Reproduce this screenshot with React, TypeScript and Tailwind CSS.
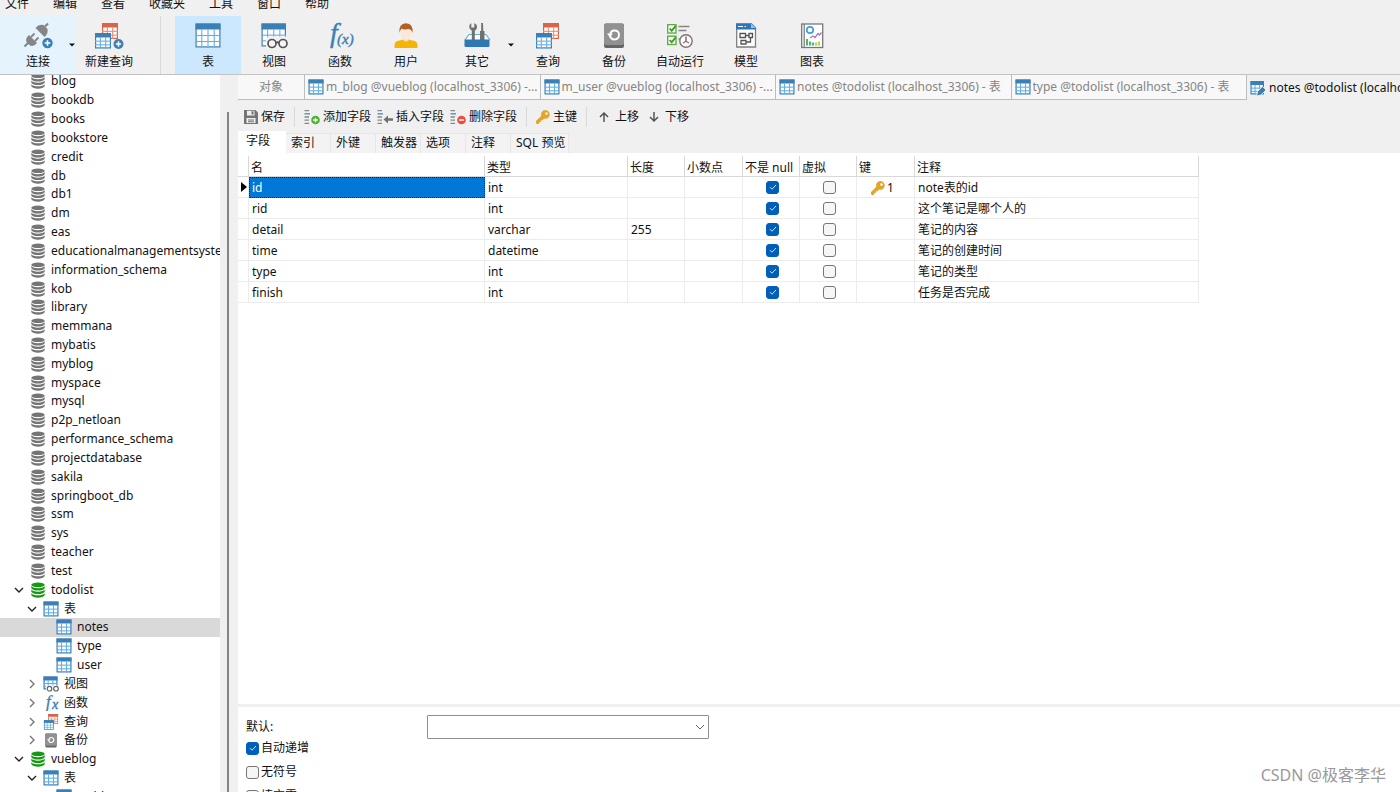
import { useState } from 'react'
import type { ReactNode } from 'react'
import clsx from 'clsx'

type TreeNode = {
  label: string
  icon: ReactNode
  depth: number
  open?: boolean
  selected?: boolean
}

type Field = {
  name: string
  type: string
  length?: string
  notNull: boolean
  virtual: boolean
  key?: number
  comment: string
}

function Sheet({ x, y, w, h, head, color, line, cols }: { x: number; y: number; w: number; h: number; head: number; color: string; line: string; cols: number }) {
  const body = h - head
  return (
    <g>
      <rect x={x + 0.6} y={y + 0.6} width={w - 1.2} height={h - 1.2} fill="#fff" stroke={color} strokeWidth="1.2" />
      <rect x={x} y={y} width={w} height={head} fill={color} />
      {Array.from({ length: cols - 1 }, (_, i) => (
        <path key={`c${i}`} d={`M${x + (w * (i + 1)) / cols} ${y + head}v${body}`} stroke={line} strokeWidth="1.1" />
      ))}
      {[1, 2].map(i => (
        <path key={`r${i}`} d={`M${x} ${y + head + (body * i) / 3}h${w}`} stroke={line} strokeWidth="1.1" />
      ))}
    </g>
  )
}

const BLUE = '#3a80b7'
const LINE = '#62b0e6'

function TableIcon({ className = 'size-4' }: { className?: string }) {
  return (
    <svg viewBox="0 0 16 16" className={clsx('shrink-0', className)}>
      <Sheet x={0.5} y={0.5} w={15} h={15} head={4} color={BLUE} line={LINE} cols={3} />
    </svg>
  )
}

function TableEditIcon() {
  return (
    <svg viewBox="0 0 16 16" className="size-4 shrink-0">
      <Sheet x={0.5} y={1} w={13.5} h={13.5} head={4} color={BLUE} line={LINE} cols={3} />
      <path d="M6.500 16l1-4.500 5-5L16 10l-5 5z" fill="#3a80b7" stroke="#f0f0f0" strokeWidth="0.900" />
    </svg>
  )
}

function BigTableIcon() {
  return (
    <svg viewBox="0 0 28 28" className="size-7">
      <Sheet x={1.5} y={2.5} w={25} h={24} head={6} color={BLUE} line={LINE} cols={4} />
    </svg>
  )
}

function ViewIcon({ className = 'size-7' }: { className?: string }) {
  return (
    <svg viewBox="0 0 28 28" className={clsx('shrink-0', className)}>
      <Sheet x={1.5} y={2.5} w={24.5} h={23} head={6} color={BLUE} line={LINE} cols={4} />
      <path d="M6 19l2-3.500h18.500L28 19v8.500H6z" fill="#f2f2f2" />
      <g fill="#f4f4f4" stroke="#555" strokeWidth="1.700">
        <circle cx="12" cy="22.500" r="4" />
        <circle cx="23" cy="22.500" r="4" />
        <path d="M16 22q1.500-1.500 3 0" fill="none" />
      </g>
    </svg>
  )
}

function SmallViewIcon() {
  return (
    <svg viewBox="0 0 16 16" className="size-4 shrink-0">
      <Sheet x={0.5} y={0.5} w={14} h={13} head={4} color={BLUE} line={LINE} cols={3} />
      <path d="M3 9.500h13V16H3z" fill="#fff" />
      <g fill="#fff" stroke="#666" strokeWidth="1.200">
        <circle cx="6.500" cy="12.700" r="2.300" />
        <circle cx="13" cy="12.700" r="2.300" />
      </g>
    </svg>
  )
}

function QueryIcon({ className = 'size-7', viewBox = '1 0 28 28', plus = false }: { className?: string; viewBox?: string; plus?: boolean }) {
  return (
    <svg viewBox={viewBox} className={clsx('shrink-0', className)}>
      <Sheet x={10} y={2} w={16} h={16} head={4.5} color="#d9644a" line="#ec8c74" cols={3} />
      <Sheet x={3} y={12} w={16} h={15.5} head={4.5} color={BLUE} line={LINE} cols={3} />
      {plus && (
        <g>
          <circle cx="26.500" cy="23" r="5" fill="#3a80b7" />
          <path d="M26.500 20.300v5.400M23.800 23h5.400" stroke="#fff" strokeWidth="1.500" />
        </g>
      )}
    </svg>
  )
}

function ConnectIcon() {
  return (
    <svg viewBox="0 0 32 28" className="h-7 w-8">
      <g fill="#858585" stroke="#858585">
        <path d="M2.500 25.500l4-4" strokeWidth="2.200" />
        <path d="M7 14l8 8q-3 4-7 2.500L4.500 21Q3 17.500 7 14z" stroke="none" />
        <path d="M9 16l3.500-3.500M13 20l3.500-3.500" strokeWidth="1.800" />
        <path d="M13.500 7l9 9q4-3.500 3-8L21.500 4q-4.500-1.500-8 3z" stroke="none" />
        <path d="M23 5.500L26 2.500" strokeWidth="2.200" />
      </g>
      <circle cx="25.500" cy="22" r="5.200" fill="#3a80b7" />
      <path d="M25.500 19.200v5.600M22.700 22h5.600" stroke="#fff" strokeWidth="1.600" />
    </svg>
  )
}

function FunctionIcon() {
  return (
    <svg viewBox="0 0 32 28" className="h-7 w-8" fill="#3a80b7" stroke="#3a80b7" fontFamily="Liberation Serif, serif" fontStyle="italic">
      <text x="6" y="21" fontSize="28" strokeWidth="0.400">f</text>
      <text x="13" y="23" fontSize="15" strokeWidth="0.400">(x)</text>
    </svg>
  )
}

function SmallFunctionIcon() {
  return (
    <svg viewBox="0 0 16 16" className="size-4 shrink-0" fill="#3a80b7" stroke="#3a80b7" fontFamily="Liberation Serif, serif" fontStyle="italic">
      <text x="3" y="12" fontSize="17" strokeWidth="0.300">f</text>
      <text x="9" y="14" fontSize="14" strokeWidth="0.400">x</text>
    </svg>
  )
}

function UserIcon() {
  return (
    <svg viewBox="0 0 28 28" className="size-7">
      <path d="M2.500 27v-3q0-4 5-4.500l4-1h5l4 1q5 .500 5 4.500v3z" fill="#f5b505" />
      <path d="M11 15h6v4q-3 3.500-6 0z" fill="#f3d9c4" />
      <ellipse cx="14" cy="11.500" rx="5.500" ry="7.500" fill="#fbe8da" />
      <path d="M7.500 12Q6.500 2.500 14 2.300 21.500 2.500 20.500 12 19.500 8.500 17 8 12 9 9.500 7.500 8 9 7.500 12z" fill="#b05f26" />
    </svg>
  )
}

function ToolsIcon() {
  return (
    <svg viewBox="0 0 28 28" className="size-7">
      <path d="M2 19l4-5.500h17l4 5.500" fill="#fff" stroke="#62b0e6" strokeWidth="1.200" />
      <path d="M8.800 19V9.500Q5.500 7.500 6.500 4l1.800-2v4.500h3V2q3 1.500 2.800 4 0 2.500-2.300 3.700V19z" fill="#707070" />
      <path d="M18.200 2h1.800l.300 8h1.200v9h-4.500v-9h1.200z" fill="#707070" />
      <path d="M1.500 18.500h25V25q0 1-1 1h-23q-1 0-1-1z" fill="#2f78b5" />
    </svg>
  )
}

function BackupIcon({ className = 'size-7' }: { className?: string }) {
  return (
    <svg viewBox="0 0 28 28" className={clsx('shrink-0', className)}>
      <rect x="4" y="2.500" width="20" height="24.500" rx="2" fill="#666" />
      <rect x="4" y="2.500" width="20" height="21.500" rx="2" fill="#919191" />
      <path d="M10 14.500q.800 4 4.500 4 4.500-.500 4.500-4.800-.300-4.200-4.500-4.200-3.500 0-4.300 3.500" fill="none" stroke="#fff" strokeWidth="1.900" />
      <path d="M7 12.500h6L9.800 16.300z" fill="#fff" />
    </svg>
  )
}

function AutomationIcon() {
  return (
    <svg viewBox="0 0 28 28" className="size-7" fill="none">
      <g stroke="#5fae45" strokeWidth="1.400">
        <rect x="1.700" y="3.700" width="8.300" height="8.300" fill="#fff" />
        <rect x="1.700" y="15.200" width="8.300" height="8.300" fill="#fff" />
        <path d="M3.700 7.500l2 2.300 4-5M3.700 19l2 2.300 4-5" strokeWidth="1.900" stroke="#43972c" />
      </g>
      <path d="M12.500 5.500h11M12.500 9.500h8M12.500 18h2" stroke="#858585" strokeWidth="1.300" />
      <circle cx="20" cy="20" r="6.200" fill="#fafafa" stroke="#777" strokeWidth="1.400" />
      <path d="M20 15.500v4.800" stroke="#555" strokeWidth="1.200" />
      <path d="M20 20.300l-3 1.700M20 20.300l3 1.700" stroke="#b65b68" strokeWidth="1.200" />
    </svg>
  )
}

function ModelIcon() {
  return (
    <svg viewBox="0 0 28 28" className="size-7" fill="none">
      <path d="M4.700 3h14.800l4 4v19H4.700z" fill="#fff" stroke="#7b8084" strokeWidth="1.300" />
      <path d="M4 2.500h15.500l4.500 4v2H4z" fill="#2f78b5" />
      <path d="M19 2.500l5 4.500h-5z" fill="#8cc7ed" />
      <path d="M6 5.500h5M12.500 5.500h1.500" stroke="#fff" />
      <g stroke="#555" strokeWidth="1.300">
        <path d="M8 12.500h5.500v4H8zM17 12.500h3.500v4H17zM9 19.500h5v3.500H9z" />
        <path d="M13.500 14.500H17M18.500 16.500v4.500H14" />
      </g>
    </svg>
  )
}

function ChartIcon() {
  return (
    <svg viewBox="0 0 28 28" className="size-7" fill="none">
      <rect x="3.700" y="3" width="21" height="23.500" fill="#fff" stroke="#777" strokeWidth="1.300" />
      <path d="M6.200 3v23.500" stroke="#777" strokeWidth="1.200" />
      <circle cx="12" cy="9" r="3.200" stroke="#3f9fe0" strokeWidth="1.700" />
      <path d="M12 17l3-2 2 1.500 3-4 1.500 1.500 2-2.500" stroke="#a978c8" strokeWidth="1.300" />
      <path d="M9 24.500V18M12 24.500v-4M15 24.500v-3" stroke="#2cae4c" strokeWidth="1.700" />
      <path d="M18 24.500v-3M21 24.500v-4" stroke="#9ccb3c" strokeWidth="1.700" />
    </svg>
  )
}

function DatabaseIcon({ active = false }: { active?: boolean }) {
  return (
    <svg viewBox="0 0 16 16" className="size-4 shrink-0" fill={active ? '#139a13' : '#757575'}>
      <ellipse cx="8" cy="2.800" rx="6.700" ry="2.300" />
      <path d="M1.300 4q2 2.200 6.700 2.200T14.700 4v2.200Q13 8.500 8 8.500T1.300 6.200z" />
      <path d="M1.300 7.600Q3 9.700 8 9.700t6.700-2.100v2.200Q13 12.100 8 12.100T1.300 9.800z" />
      <path d="M1.300 11.200q1.700 2.100 6.700 2.100t6.700-2.100v2.100Q13 15.700 8 15.700t-6.700-2.400z" />
    </svg>
  )
}

function SaveIcon() {
  return (
    <svg viewBox="0 0 14 14" className="size-[14px]">
      <path d="M0 0h11.500L14 2.500V14H0z" fill="#747474" />
      <path d="M3 0.800h7.500v4.700H3zM2.500 8h9v5h-9z" fill="#efefef" />
      <path d="M7.500 1.300h2v3.200h-2zM4 9.500h6v.900H4zM4 11.300h6v.900H4z" fill="#747474" />
    </svg>
  )
}

function FieldIcon({ kind }: { kind: 'add' | 'insert' | 'delete' }) {
  return (
    <svg viewBox="0 0 16 16" className="size-4" fill="none">
      <path d="M0.500 1.700h4.500M0.500 8h4.500M0.500 11.200h4.500M0.500 14.400h4.500" stroke="#888" strokeWidth="1.300" />
      <path d="M0.500 4.800H6" stroke="#4d9bd6" strokeWidth="1.500" />
      {kind === 'insert' && <path d="M6.500 10.500l4.500-4v2.700h5v2.600h-5v2.700z" fill="#707070" />}
      {kind !== 'insert' && <circle cx="11.500" cy="11" r="4.300" fill={kind === 'add' ? '#4eb02f' : '#ee4b40'} />}
      {kind === 'add' && <path d="M11.500 8.700v4.600M9.200 11h4.600" stroke="#fff" strokeWidth="1.300" />}
      {kind === 'delete' && <path d="M9 11h5" stroke="#fff" strokeWidth="1.500" />}
    </svg>
  )
}

function KeyIcon() {
  return (
    <svg viewBox="0 0 14 14" className="size-[14px]">
      <path d="M9.500 0a4.400 4.400 0 0 0-4.200 5.800L0 11v2.300l1 .700h2v-1.800h1.700v-1.700h1.500L8 8.600A4.400 4.400 0 1 0 9.500 0zm1 2.300a1.300 1.300 0 1 1 0 2.600 1.300 1.300 0 0 1 0-2.600z" fill="#e2a526" />
    </svg>
  )
}

function ArrowIcon({ down = false }: { down?: boolean }) {
  return (
    <svg viewBox="0 0 10 10" className={clsx('size-[10px]', down && 'rotate-180')} fill="none" stroke="#555" strokeWidth="1.500">
      <path d="M5 10V1M1 5l4-4 4 4" />
    </svg>
  )
}

function Chevron({ open }: { open: boolean }) {
  return (
    <svg viewBox="0 0 10 10" className="size-[10px]" fill="none" stroke={open ? '#222' : '#777'} strokeWidth="1.400">
      <path d={open ? 'M1 3l4 4 4-4' : 'M3 1l4 4-4 4'} />
    </svg>
  )
}

function Check({ id, label, defaultChecked }: { id?: string; label?: string; defaultChecked: boolean }) {
  return (
    <span className="inline-grid place-items-center">
      <input
        id={id}
        type="checkbox"
        aria-label={label}
        defaultChecked={defaultChecked}
        className="peer col-start-1 row-start-1 size-[13px] appearance-none rounded-[3px] border border-[#777] bg-[#f6f6f6] checked:border-[#005fb8] checked:bg-[#005fb8]"
      />
      <svg viewBox="0 0 12 12" className="pointer-events-none invisible col-start-1 row-start-1 size-3 peer-checked:visible" fill="none" stroke="#d5e6f5">
        <path d="M3 6.200l2 2 4-4.200" />
      </svg>
    </span>
  )
}

function ToolButton({ label, icon, tone, menu = false }: { label: string; icon: ReactNode; tone?: 'hover' | 'active'; menu?: boolean }) {
  return (
    <button
      className={clsx(
        'flex items-start pt-[5px]',
        menu ? 'w-[76px]' : 'w-[66px]',
        tone === 'hover' && 'bg-[#e5f3fd]',
        tone === 'active' && 'bg-[#cce8ff]',
      )}
    >
      <span className={clsx('flex shrink-0 flex-col items-center gap-1', menu ? 'w-[76px]' : 'w-[66px]')}>
        {icon}
        <span className="leading-[18px] whitespace-nowrap">{label}</span>
      </span>
      {menu && (
        <svg viewBox="0 0 6 4" className="-ml-[7px] mt-[22px] h-1 w-[6px] shrink-0">
          <path d="M0 0.500h6L3 3.500z" fill="#111" />
        </svg>
      )}
    </button>
  )
}

const menus = ['文件', '编辑', '查看', '收藏夹', '工具', '窗口', '帮助']

const databases = [
  'blog', 'bookdb', 'books', 'bookstore', 'credit', 'db', 'db1', 'dm', 'eas',
  'educationalmanagementsystem', 'information_schema', 'kob', 'library', 'memmana',
  'mybatis', 'myblog', 'myspace', 'mysql', 'p2p_netloan', 'performance_schema',
  'projectdatabase', 'sakila', 'springboot_db', 'ssm', 'sys', 'teacher', 'test',
]

const tree: TreeNode[] = [
  ...databases.map(label => ({ label, icon: <DatabaseIcon />, depth: 0 })),
  { label: 'todolist', icon: <DatabaseIcon active />, depth: 0, open: true },
  { label: '表', icon: <TableIcon />, depth: 1, open: true },
  { label: 'notes', icon: <TableIcon />, depth: 2, selected: true },
  { label: 'type', icon: <TableIcon />, depth: 2 },
  { label: 'user', icon: <TableIcon />, depth: 2 },
  { label: '视图', icon: <SmallViewIcon />, depth: 1, open: false },
  { label: '函数', icon: <SmallFunctionIcon />, depth: 1, open: false },
  { label: '查询', icon: <QueryIcon className="size-4" viewBox="2 2 25 26" />, depth: 1, open: false },
  { label: '备份', icon: <BackupIcon className="size-4" />, depth: 1, open: false },
  { label: 'vueblog', icon: <DatabaseIcon active />, depth: 0, open: true },
  { label: '表', icon: <TableIcon />, depth: 1, open: true },
  { label: 'm_blog', icon: <TableIcon />, depth: 2 },
]

const indent = ['pl-[14px]', 'pl-[27px]', 'pl-[40px]']

const tabs = [
  'm_blog @vueblog (localhost_3306) -...',
  'm_user @vueblog (localhost_3306) -...',
  'notes @todolist (localhost_3306) - 表',
  'type @todolist (localhost_3306) - 表',
]

const sections = ['字段', '索引', '外键', '触发器', '选项', '注释', 'SQL 预览']

const fields: Field[] = [
  { name: 'id', type: 'int', notNull: true, virtual: false, key: 1, comment: 'note表的id' },
  { name: 'rid', type: 'int', notNull: true, virtual: false, comment: '这个笔记是哪个人的' },
  { name: 'detail', type: 'varchar', length: '255', notNull: true, virtual: false, comment: '笔记的内容' },
  { name: 'time', type: 'datetime', notNull: true, virtual: false, comment: '笔记的创建时间' },
  { name: 'type', type: 'int', notNull: true, virtual: false, comment: '笔记的类型' },
  { name: 'finish', type: 'int', notNull: true, virtual: false, comment: '任务是否完成' },
]

const columns = [
  { label: '', width: 'w-[11px]' },
  { label: '名', width: 'w-[236px]' },
  { label: '类型', width: 'w-[143px]' },
  { label: '长度', width: 'w-[57px]' },
  { label: '小数点', width: 'w-[58px]' },
  { label: '不是 null', width: 'w-[57px]' },
  { label: '虚拟', width: 'w-[57px]' },
  { label: '键', width: 'w-[58px]' },
  { label: '注释', width: 'w-[284px]' },
]

function Sidebar() {
  return (
    <aside className="flex w-[238px] shrink-0 overflow-hidden">
      <ul className="-mt-[3px] -mb-[14px] flex w-[220px] flex-col bg-white">
        {tree.map((node, i) => (
          <li key={i} className="flex min-h-[18px] flex-1 basis-0">
            <button className={clsx('flex w-full items-center overflow-hidden', indent[node.depth], node.selected && 'bg-[#d9d9d9]')}>
              <span className="w-4 shrink-0">{node.open !== undefined && <Chevron open={node.open} />}</span>
              {node.icon}
              <span className="pl-[5px] leading-[18px] whitespace-nowrap">{node.label}</span>
            </button>
          </li>
        ))}
      </ul>
      <div className="flex flex-1 pt-[37px] pl-[7px]">
        <div className="w-[2px] bg-[#858585]" />
      </div>
    </aside>
  )
}

function Separator() {
  return <div className="mx-[9px] h-5 w-px bg-[#dadada]" />
}

function EditorToolbar() {
  const item = 'flex items-center gap-[3px] whitespace-nowrap'
  return (
    <div className="flex h-[31px] items-center pt-[2px] pl-[6px]">
      <button className={item}><SaveIcon />保存</button>
      <Separator />
      <div className="flex gap-[6px]">
        <button className={item}><FieldIcon kind="add" />添加字段</button>
        <button className={item}><FieldIcon kind="insert" />插入字段</button>
        <button className={item}><FieldIcon kind="delete" />删除字段</button>
      </div>
      <Separator />
      <button className={item}><KeyIcon />主键</button>
      <Separator />
      <div className="flex gap-[10px] pl-[3px]">
        <button className="flex items-center gap-[6px]"><ArrowIcon />上移</button>
        <button className="flex items-center gap-[6px]"><ArrowIcon down />下移</button>
      </div>
    </div>
  )
}

function FieldTable() {
  const cell = 'h-[21px] border-r border-b border-[#ececec] p-0 pl-[3px]'
  const textCell = clsx(cell, 'pt-[2px]')
  return (
    <table className="w-[961px] table-fixed border-separate border-spacing-0">
      <thead>
        <tr>
          {columns.map((c, i) => (
            <th key={i} className={clsx('h-[21px] border-r border-b border-[#d8d8d8] p-0 pt-[4px] pl-[2px] text-left leading-4 font-normal whitespace-nowrap', c.width)}>
              {c.label}
            </th>
          ))}
        </tr>
      </thead>
      <tbody>
        {fields.map((f, i) => (
          <tr key={f.name} className="leading-[18px]">
            <td className={cell}>
              {i === 0 && (
                <svg viewBox="0 0 6 10" className="h-[10px] w-[6px]">
                  <path d="M0 0l6 5-6 5z" fill="#000" />
                </svg>
              )}
            </td>
            <td className={clsx('h-[21px] p-0', i === 0 ? 'border border-dotted border-[#222] bg-[#0078d7] pl-[2px] text-white' : 'border-r border-b border-[#ececec] pt-[2px] pl-[3px]')}>
              {f.name}
            </td>
            <td className={textCell}>{f.type}</td>
            <td className={textCell}>{f.length}</td>
            <td className={textCell} />
            <td className={cell}>
              <div className="flex justify-center"><Check label={`${f.name} 不是 null`} defaultChecked={f.notNull} /></div>
            </td>
            <td className={cell}>
              <div className="flex justify-center"><Check label={`${f.name} 虚拟`} defaultChecked={f.virtual} /></div>
            </td>
            <td className={textCell}>
              {f.key && <div className="flex items-center gap-[2px] pl-[11px]"><KeyIcon />{f.key}</div>}
            </td>
            <td className={textCell}>{f.comment}</td>
          </tr>
        ))}
      </tbody>
    </table>
  )
}

function Properties() {
  const row = 'flex items-center gap-[2px]'
  return (
    <div className="h-[85px] overflow-hidden bg-white pt-2 pl-2">
      <div className="flex h-6 items-center">
        <label htmlFor="default" className="w-[181px]">默认:</label>
        <div className="grid w-[282px] items-center">
          <select id="default" className="col-start-1 row-start-1 h-6 appearance-none rounded-[1px] border border-[#8f8f8f] bg-white px-1">
            <option></option>
          </select>
          <svg viewBox="0 0 10 10" className="pointer-events-none col-start-1 row-start-1 mr-1 size-[10px] justify-self-end" fill="none" stroke="#666">
            <path d="M1 3l4 4 4-4" />
          </svg>
        </div>
      </div>
      <div className="flex flex-col gap-[6px]">
        <div className={row}><Check id="auto" defaultChecked /><label htmlFor="auto" className="leading-[18px]">自动递增</label></div>
        <div className={row}><Check id="unsigned" defaultChecked={false} /><label htmlFor="unsigned" className="leading-[18px]">无符号</label></div>
        <div className={row}><Check id="zerofill" defaultChecked={false} /><label htmlFor="zerofill" className="leading-[18px]">填充零</label></div>
      </div>
    </div>
  )
}

export default function App() {
  const [section, setSection] = useState('字段')

  return (
    <div className="relative flex h-screen flex-col overflow-hidden bg-[#f0f0f0] font-['Noto_Sans','Noto_Sans_CJK_SC',sans-serif] text-[12px] text-[#111]">
      <nav className="flex h-4 shrink-0 items-end gap-6 pb-[3px] pl-[5px]">
        {menus.map(m => <button key={m} className="leading-[18px]">{m}</button>)}
      </nav>

      <header className="flex h-[59px] shrink-0 border-b border-[#c3c3c3]">
        <ToolButton label="连接" icon={<ConnectIcon />} tone="hover" menu />
        <ToolButton label="新建查询" icon={<QueryIcon plus viewBox="1 0 32 28" className="h-7 w-8" />} />
        <div className="mr-[14px] ml-[18px] w-px bg-[#d9d9d9]" />
        <ToolButton label="表" icon={<BigTableIcon />} tone="active" />
        <ToolButton label="视图" icon={<ViewIcon />} />
        <ToolButton label="函数" icon={<FunctionIcon />} />
        <ToolButton label="用户" icon={<UserIcon />} />
        <ToolButton label="其它" icon={<ToolsIcon />} menu />
        <ToolButton label="查询" icon={<QueryIcon />} />
        <ToolButton label="备份" icon={<BackupIcon />} />
        <ToolButton label="自动运行" icon={<AutomationIcon />} />
        <ToolButton label="模型" icon={<ModelIcon />} />
        <ToolButton label="图表" icon={<ChartIcon />} />
      </header>

      <div className="flex min-h-0 flex-1">
        <Sidebar />
        <main className="flex min-w-0 flex-1 flex-col">
          <div className="flex h-[25px] shrink-0 text-[#858585]">
            <button className="w-[67px] border-r border-b border-[#bdbdbd] bg-[#f8f8f8]">对象</button>
            {tabs.map(t => (
              <button key={t} className="flex min-w-0 flex-1 items-center gap-[2px] border-r border-b border-[#bdbdbd] bg-[#f8f8f8] pl-[3px] whitespace-nowrap">
                <TableIcon />
                <span className="truncate">{t}</span>
              </button>
            ))}
            <button className="flex w-[153px] items-center gap-[3px] overflow-hidden pl-[3px] whitespace-nowrap text-[#111]">
              <TableEditIcon />
              notes @todolist (localhost_3306) - 表
            </button>
          </div>

          <EditorToolbar />

          <div className="flex h-[22px] shrink-0 items-end">
            {sections.map(s => (
              <button
                key={s}
                onClick={() => setSection(s)}
                className={clsx(
                  'text-left whitespace-nowrap',
                  s === section
                    ? 'h-[22px] w-12 bg-white pb-[2px] pl-2'
                    : 'h-5 min-w-[45px] border-t border-r border-[#e6e6e6] bg-[#f3f3f3] pr-[3px] pb-[2px] pl-[5px]',
                )}
              >
                {s}
              </button>
            ))}
          </div>

          <div className="min-h-0 flex-1 overflow-hidden bg-white pt-[3px]">
            <FieldTable />
          </div>
          <div className="h-[3px] shrink-0" />
          <Properties />
        </main>
      </div>

      <div className="pointer-events-none absolute right-[14px] bottom-[5px] text-base text-[#999]">CSDN @极客李华</div>
    </div>
  )
}
